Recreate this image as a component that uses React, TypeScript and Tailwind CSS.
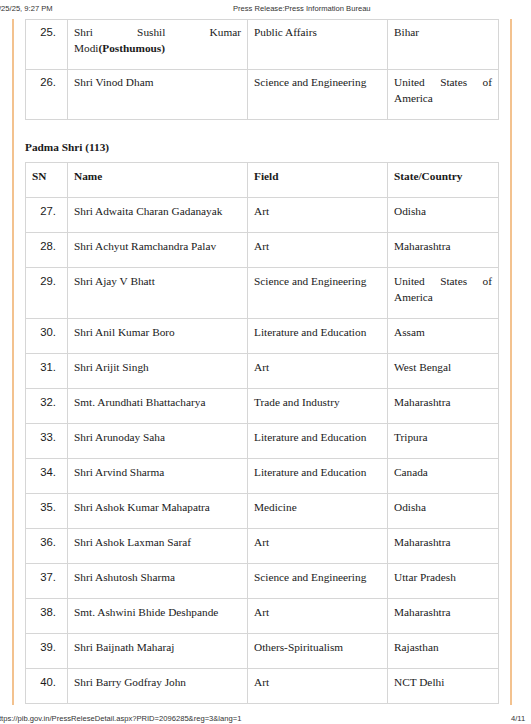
import React from "react";

type Row = { sn: string; name: React.ReactNode; field: string; state: string };

const rows1: Row[] = [
  {
    sn: "25.",
    name: (
      <>
        Shri Sushil Kumar Modi<b className="font-bold font-['Liberation_Serif',serif]">(Posthumous)</b>
      </>
    ),
    field: "Public Affairs",
    state: "Bihar",
  },
  { sn: "26.", name: "Shri Vinod Dham", field: "Science and Engineering", state: "United States of America" },
];

const rows2: Row[] = [
  { sn: "27.", name: "Shri Adwaita Charan Gadanayak", field: "Art", state: "Odisha" },
  { sn: "28.", name: "Shri Achyut Ramchandra Palav", field: "Art", state: "Maharashtra" },
  { sn: "29.", name: "Shri Ajay V Bhatt", field: "Science and Engineering", state: "United States of America" },
  { sn: "30.", name: "Shri Anil Kumar Boro", field: "Literature and Education", state: "Assam" },
  { sn: "31.", name: "Shri Arijit Singh", field: "Art", state: "West Bengal" },
  { sn: "32.", name: "Smt. Arundhati Bhattacharya", field: "Trade and Industry", state: "Maharashtra" },
  { sn: "33.", name: "Shri Arunoday Saha", field: "Literature and Education", state: "Tripura" },
  { sn: "34.", name: "Shri Arvind Sharma", field: "Literature and Education", state: "Canada" },
  { sn: "35.", name: "Shri Ashok Kumar Mahapatra", field: "Medicine", state: "Odisha" },
  { sn: "36.", name: "Shri Ashok Laxman Saraf", field: "Art", state: "Maharashtra" },
  { sn: "37.", name: "Shri Ashutosh Sharma", field: "Science and Engineering", state: "Uttar Pradesh" },
  { sn: "38.", name: "Smt. Ashwini Bhide Deshpande", field: "Art", state: "Maharashtra" },
  { sn: "39.", name: "Shri Baijnath Maharaj", field: "Others-Spiritualism", state: "Rajasthan" },
  { sn: "40.", name: "Shri Barry Godfray John", field: "Art", state: "NCT Delhi" },
];

const tdA = "border border-[#d6d6d6] align-top pt-[4px] pb-[13px] px-[6px] leading-[16px]";
const tdB = "border border-[#d6d6d6] align-top pt-[5px] pb-[13px] px-[6px] leading-[16px]";
const serif = "font-['Liberation_Serif',serif]";
const sans = "font-['Liberation_Sans',Arial,sans-serif]";

function Cols() {
  return (
    <colgroup>
      <col className="w-[42px]" />
      <col className="w-[180px]" />
      <col className="w-[140px]" />
      <col className="w-[111px]" />
    </colgroup>
  );
}

function Body({ rows, td }: { rows: Row[]; td: string }) {
  return (
    <tbody>
      {rows.map((r) => (
        <tr key={r.sn}>
          <td className={`${td} ${sans} text-right pr-[11px]`}>{r.sn}</td>
          <td className={`${td} text-justify`}>{r.name}</td>
          <td className={`${td} text-justify`}>{r.field}</td>
          <td className={`${td} text-justify`}>{r.state}</td>
        </tr>
      ))}
    </tbody>
  );
}

export default function App() {
  return (
    <div className={`w-[531px] h-[724px] overflow-hidden bg-white text-[#1a1a1a] ${serif}`}>
      <div className={`h-[17px] flex items-center text-[7.6px] text-[#333] ${sans}`}>
        <span className="w-[234px] -ml-[1px]">/25/25, 9:27 PM</span>
        <span>Press Release:Press Information Bureau</span>
      </div>
      <div className="ml-[12px] w-[500px] h-[686px] border-x-2 border-[#f3c28f] pl-[11px]">
        <table className="mt-[2px] w-[473px] table-fixed border-collapse text-[11.3px]">
          <Cols />
          <Body rows={rows1} td={tdA} />
        </table>
        <div className="mt-[19px] mb-[7px] leading-[16px] text-[11.3px] font-bold">Padma Shri (113)</div>
        <table className="w-[473px] table-fixed border-collapse text-[11.3px]">
          <Cols />
          <thead>
            <tr>
              <th className={`${tdB} text-left font-bold`}>SN</th>
              <th className={`${tdB} text-left font-bold`}>Name</th>
              <th className={`${tdB} text-left font-bold`}>Field</th>
              <th className={`${tdB} text-left font-bold`}>State/Country</th>
            </tr>
          </thead>
          <Body rows={rows2} td={tdB} />
        </table>
      </div>
      <div className={`flex pt-[9px] leading-[9px] text-[7.6px] text-[#333] ${sans}`}>
        <span className="w-[512px] -ml-[1px] whitespace-nowrap">ttps://pib.gov.in/PressReleseDetail.aspx?PRID=2096285&amp;reg=3&amp;lang=1</span>
        <span>4/11</span>
      </div>
    </div>
  );
}
